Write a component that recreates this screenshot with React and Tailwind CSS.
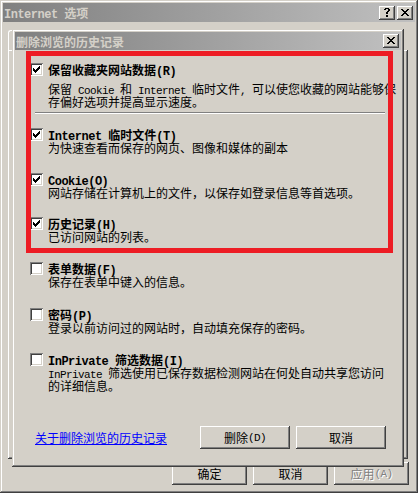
import React from 'react';

const winBevel =
  'shadow-[inset_-1px_-1px_#404040,inset_1px_1px_#d4d0c8,inset_-2px_-2px_#808080,inset_2px_2px_#ffffff]';
const btnBevel =
  'shadow-[inset_-1px_-1px_#404040,inset_1px_1px_#ffffff,inset_-2px_-2px_#808080,inset_2px_2px_#d4d0c8]';

// latin runs get a narrow mono face so they keep the half-width rhythm;
// zero line-height keeps them from stretching the 13px line
function M({ children, bold }) {
  return (
    <span
      className={
        bold
          ? "font-['Liberation_Mono',monospace] text-[12px] leading-[0] tracking-[-0.5px]"
          : "font-['Liberation_Mono',monospace] text-[11px] leading-[0] tracking-[-0.6px]"
      }
    >
      {children}
    </span>
  );
}

function Px({ rows }) {
  return rows.map(([x, y, w], i) => (
    <rect key={i} x={x} y={y} width={w} height={1} fill="#000" />
  ));
}

const checkRows = [
  [9, 3, 1],
  [8, 4, 2],
  [3, 5, 1],
  [7, 5, 3],
  [3, 6, 2],
  [6, 6, 3],
  [3, 7, 5],
  [4, 8, 3],
  [5, 9, 1],
];

const closeRows = [
  [0, 0, 2], [6, 0, 2],
  [1, 1, 2], [5, 1, 2],
  [2, 2, 4],
  [3, 3, 2],
  [2, 4, 4],
  [1, 5, 2], [5, 5, 2],
  [0, 6, 2], [6, 6, 2],
];

const helpRows = [
  [1, 0, 4],
  [0, 1, 2], [4, 1, 2],
  [4, 2, 2],
  [3, 3, 2],
  [2, 4, 2],
  [2, 5, 2],
  [2, 7, 2],
  [2, 8, 2],
];

function CapButton({ kind }) {
  return (
    <div className={`w-[16px] h-[14px] bg-[#d4d0c8] flex items-center justify-center ${btnBevel}`}>
      {kind === 'close' ? (
        <svg width="8" height="7" shapeRendering="crispEdges" className="block -mt-px">
          <Px rows={closeRows} />
        </svg>
      ) : (
        <svg width="6" height="9" shapeRendering="crispEdges" className="block -ml-px">
          <Px rows={helpRows} />
        </svg>
      )}
    </div>
  );
}

function Box({ checked }) {
  return (
    <div className="w-[13px] h-[13px] shrink-0 bg-white shadow-[inset_1px_1px_#808080,inset_-1px_-1px_#ffffff,inset_2px_2px_#404040,inset_-2px_-2px_#d4d0c8]">
      {checked && (
        <svg width="13" height="13" shapeRendering="crispEdges" className="block">
          <Px rows={checkRows} />
        </svg>
      )}
    </div>
  );
}

function Option({ checked, label, lines, className = '', descClass = '' }) {
  return (
    <div className={className}>
      <div className="flex items-start h-[13px]">
        <Box checked={checked} />
        <span className="ml-[5px] font-bold leading-[13px] whitespace-nowrap">{label}</span>
      </div>
      <div className={`pl-[18px] leading-[13px] whitespace-nowrap ${descClass}`}>
        {lines.map((l, i) => (
          <div key={i} className="h-[13px]">
            {l}
          </div>
        ))}
      </div>
    </div>
  );
}

function Button({ children, w, disabled }) {
  return (
    <div
      className={`${w} h-[23px] bg-[#d4d0c8] flex items-center justify-center leading-[13px] ${btnBevel} ${
        disabled ? 'text-[#808080] [text-shadow:1px_1px_0_#ffffff]' : 'text-black'
      }`}
    >
      {children}
    </div>
  );
}

export default function App() {
  return (
    <div
      className={`relative w-[418px] h-[493px] bg-[#d4d0c8] p-[3px] flex flex-col text-[12px] text-black font-['Noto_Sans_CJK_SC','Liberation_Sans',sans-serif] ${winBevel}`}
    >
      {/* ── outer window title ── */}
      <div className="h-[19px] shrink-0 flex items-center pl-px pr-[2px] bg-linear-to-r from-[#808080] to-[#c0c0c0]">
        <span className="font-bold text-[#d4d0c8] leading-[13px] whitespace-nowrap">
          <M bold>Internet </M>选项
        </span>
        <div className="ml-auto flex gap-[2px]">
          <CapButton kind="help" />
          <CapButton kind="close" />
        </div>
      </div>

      {/* ── tab strip + page, mostly hidden under the dialog ── */}
      <div className="mt-[8px] h-[20px] shrink-0 pl-[5px]">
        <div className="w-[60px] h-[20px] border-l border-t border-white rounded-tl-[3px]" />
      </div>
      <div className="ml-[5px] mr-[7px] h-[409px] shrink-0 shadow-[inset_-1px_-1px_#404040,inset_1px_1px_#ffffff,inset_-2px_-2px_#808080]" />

      <div className="mt-[3px] flex justify-end gap-[6px] pr-[6px]">
        <Button w="w-[75px]">确定</Button>
        <Button w="w-[75px]">取消</Button>
        <Button w="w-[75px]" disabled>
          应用<M>(A)</M>
        </Button>
      </div>

      {/* ── delete browsing history dialog ── */}
      <div
        className={`absolute left-[12px] top-[29px] w-[392px] h-[438px] bg-[#d4d0c8] p-[3px] flex flex-col ${winBevel}`}
      >
        <div className="h-[18px] shrink-0 flex items-center pl-px pr-[2px] bg-linear-to-r from-[#808080] to-[#c0c0c0]">
          <span className="font-bold text-[#d4d0c8] leading-[13px] whitespace-nowrap">
            删除浏览的历史记录
          </span>
          <div className="ml-auto">
            <CapButton kind="close" />
          </div>
        </div>

        <div className="relative flex-1 flex flex-col">
          <div className="pl-[15px] pt-[13px] flex flex-col">
            <Option
              checked
              label={<>保留收藏夹网站数据<M bold>(R)</M></>}
              descClass="mt-[6px]"
              lines={[
                <>保留<M>{' Cookie '}</M>和<M>{' Internet '}</M>临时文件<M>{', '}</M>可以使您收藏的网站能够保</>,
                <>存偏好选项并提高显示速度。</>,
              ]}
            />
            <div className="ml-[5px] mt-[4px] w-[350px] h-[2px] border-t border-[#808080] border-b border-b-white" />
            <Option
              checked
              className="mt-[14px]"
              label={<><M bold>Internet </M>临时文件<M bold>(T)</M></>}
              lines={[<>为快速查看而保存的网页、图像和媒体的副本</>]}
            />
            <Option
              checked
              className="mt-[19px]"
              label={<><M bold>Cookie(O)</M></>}
              lines={[<>网站存储在计算机上的文件，以保存如登录信息等首选项。</>]}
            />
            <Option
              checked
              className="mt-[18px]"
              label={<>历史记录<M bold>(H)</M></>}
              lines={[<>已访问网站的列表。</>]}
            />
            <Option
              className="mt-[19px]"
              label={<>表单数据<M bold>(F)</M></>}
              lines={[<>保存在表单中键入的信息。</>]}
            />
            <Option
              className="mt-[20px]"
              label={<>密码<M bold>(P)</M></>}
              lines={[<>登录以前访问过的网站时，自动填充保存的密码。</>]}
            />
            <Option
              className="mt-[19px]"
              label={<><M bold>InPrivate </M>筛选数据<M bold>(I)</M></>}
              lines={[
                <><M>{'InPrivate '}</M>筛选使用已保存数据检测网站在何处自动共享您访问</>,
                <>的详细信息。</>,
              ]}
            />
          </div>

          <div className="mt-[34px] flex items-center pl-[20px] pr-[15px]">
            <span className="text-[#0000ff] underline leading-[13px] whitespace-nowrap">
              关于删除浏览的历史记录
            </span>
            <div className="ml-auto flex gap-[6px]">
              <Button w="w-[90px]">
                删除<M>(D)</M>
              </Button>
              <Button w="w-[90px]">取消</Button>
            </div>
          </div>

          {/* red annotation frame drawn over the first four options */}
          <div className="absolute left-[11px] top-[1px] w-[367px] h-[202px] border-[5px] border-[#ed1c24] pointer-events-none" />
        </div>
      </div>
    </div>
  );
}
